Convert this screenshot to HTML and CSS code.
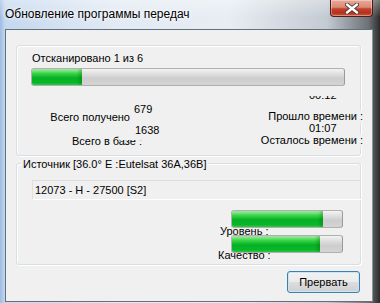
FILE: index.html
```html
<!DOCTYPE html>
<html>
<head>
    <title>Обновление программы передач</title>
    <link rel="stylesheet" href="styles.css">
</head>
<body>
    <div class="window">
        <div class="titlebar">
            <span class="title">Обновление программы передач</span>
            <div class="close">
                <svg width="14" height="11" viewBox="0 0 14 11">
                    <path d="M2 1.5 L12 9.5 M12 1.5 L2 9.5" stroke="#4a3a3a" stroke-width="4.2" stroke-linecap="round"/>
                    <path d="M2 1.5 L12 9.5 M12 1.5 L2 9.5" stroke="#ffffff" stroke-width="2.4" stroke-linecap="round"/>
                </svg>
            </div>
        </div>

        <div class="client">
            <div class="group scan">
                <div class="scan-label">Отсканировано 1 из 6</div>
                <div class="progress wide"><div class="fill" style="width:50px"></div></div>

                <div class="stats">
                    <div class="stats-left">
                        <div class="stat stat-a">
                            <span class="stat-label">Всего получено</span>
                            <span class="stat-value">679</span>
                        </div>
                        <div class="stat stat-b">
                            <span class="stat-label">Всего в базе :</span>
                            <span class="stat-value">1638</span>
                        </div>
                    </div>
                    <div class="stats-right">
                        <div class="time-value clip"><span>00:12</span></div>
                        <div class="time-label">Прошло времени :</div>
                        <div class="time-value second">01:07</div>
                        <div class="time-label last">Осталось времени :</div>
                    </div>
                </div>
            </div>

            <div class="group source">
                <div class="group-title">Источник [36.0° E :Eutelsat 36A,36B]</div>
                <div class="transponder">12073 - H - 27500 [S2]</div>
                <div class="signal">
                    <div class="progress small"><div class="fill" style="width:91px"></div></div>
                    <div class="signal-label level">Уровень :</div>
                    <div class="progress small second"><div class="fill" style="width:88px"></div></div>
                    <div class="signal-label quality">Качество :</div>
                </div>
            </div>

            <div class="actions">
                <button class="btn">Прервать</button>
            </div>
        </div>
    </div>
</body>
</html>
```

FILE: styles.css
```css
body {
    margin: 0;
    font-family: "Liberation Sans", Arial, sans-serif;
    font-size: 11px;
    color: #000;
    background: #2a2a2a;
}
.window {
    width: 380px;
    height: 303px;
    overflow: hidden;
    background: linear-gradient(90deg, #9dbbe2 0, #c4d8ef 5px, #e2eaf3 30%, #e8edf3 60%, #c3cad2 86%, #6c7176 97%, #2b2b2b 100%);
}
.titlebar {
    height: 29px;
    display: flex;
    align-items: flex-start;
    background: linear-gradient(180deg, rgba(255,255,255,0.35), rgba(255,255,255,0) 60%);
}
.title {
    font-size: 12px;
    line-height: 14px;
    margin: 7px 0 0 5px;
    text-shadow: 0 0 6px #fff, 0 0 3px #fff;
}
.close {
    margin-left: auto;
    margin-right: 7px;
    width: 43px;
    height: 17px;
    box-sizing: border-box;
    border: 1px solid #4d1e17;
    border-top: none;
    border-radius: 0 0 4px 4px;
    background: linear-gradient(180deg, #e9a999 0%, #dc8a78 45%, #c2432b 55%, #b5301b 80%, #d0553c 100%);
    box-shadow: inset 0 0 0 1px rgba(255,255,255,0.35);
    display: flex;
    align-items: center;
    justify-content: center;
}
.client {
    width: 368px;
    height: 273px;
    margin-left: 5px;
    box-sizing: border-box;
    border: 1px solid #61707f;
    border-right-color: #8a939c;
    background: #f0f0f0;
    overflow: hidden;
}
.group {
    margin-left: 10px;
    width: 345px;
    box-sizing: border-box;
    border: 1px solid #d5dfe5;
    border-radius: 3px;
    box-shadow: 1px 1px 0 #fff, inset 1px 1px 0 #fff;
}
.scan {
    margin-top: 15px;
    height: 111px;
}
.scan-label {
    line-height: 13px;
    margin: 6px 0 0 15px;
}
.progress {
    position: relative;
    z-index: 1;
    box-sizing: border-box;
    height: 18px;
    border: 1px solid #b0b0b0;
    border-right-color: #9a9a9a;
    border-radius: 3px;
    background: linear-gradient(180deg, #f4f4f4 0%, #e2e2e2 25%, #cdcdcd 60%, #d4d4d4 100%);
    overflow: hidden;
}
.progress .fill {
    height: 100%;
    background: linear-gradient(180deg, #b8f2b8 0%, #3fd84a 25%, #06b025 55%, #08b828 85%, #37d24a 100%);
    box-shadow: inset -3px 0 3px rgba(0,80,0,0.25);
}
.wide {
    margin: 3px 0 0 14px;
    width: 314px;
}
.stats {
    display: flex;
    margin-top: 10px;
}
.stat {
    display: flex;
}
.stat-a {
    height: 28px;
}
.stat-b {
    height: 24px;
}
.stat-label {
    align-self: flex-end;
    line-height: 13px;
    text-align: right;
}
.stat-value {
    align-self: flex-start;
    line-height: 13px;
    background: #f0f0f0;
}
.stat-a .stat-label {
    width: 113px;
}
.stat-a .stat-value {
    margin: 7px 0 0 4px;
}
.stat-b .stat-label {
    width: 125px;
}
.stat-b .stat-value {
    margin-left: -22px;
    padding: 0 6px 3px 15px;
}
.stats-right {
    margin-left: auto;
    margin-right: -3px;
    width: 112px;
    display: flex;
    flex-direction: column;
}
.time-value {
    margin-left: 58px;
    line-height: 13px;
}
.clip {
    height: 5px;
    overflow: hidden;
}
.clip span {
    display: block;
    margin-top: -7px;
}
.time-label {
    margin-top: 9px;
    line-height: 13px;
    text-align: right;
    background: #f0f0f0;
}
.time-value.second {
    margin-top: -1px;
}
.time-label.last {
    margin-top: -1px;
}
.source {
    margin-top: 7px;
    height: 102px;
}
.group-title {
    width: fit-content;
    margin: -6px 0 0 4px;
    padding: 0 2px;
    line-height: 13px;
    background: #f0f0f0;
}
.transponder {
    margin: 9px -1px 0 15px;
    height: 20px;
    box-sizing: border-box;
    border-top: 1px solid #dcdcdc;
    border-left: 1px solid #e0e0e0;
    border-bottom: 1px solid #fff;
    padding-left: 2px;
    line-height: 18px;
}
.small {
    width: 112px;
    margin: 10px 0 0 214px;
}
.small.second {
    margin-top: -3px;
}
.signal-label {
    line-height: 13px;
}
.level {
    margin: -3px 0 0 203px;
}
.quality {
    margin: -4px 0 0 201px;
}
.actions {
    display: flex;
    justify-content: flex-end;
    padding-right: 12px;
    margin-top: 6px;
}
.btn {
    width: 73px;
    height: 22px;
    padding: 0;
    font-family: "Liberation Sans", Arial, sans-serif;
    font-size: 11px;
    color: #000;
    border: 1px solid #3c7fb1;
    border-radius: 3px;
    background: linear-gradient(180deg, #f2f2f2 0%, #ebebeb 48%, #dddddd 52%, #cfcfcf 100%);
    box-shadow: inset 0 0 0 1px #c9e6f7;
}
```
